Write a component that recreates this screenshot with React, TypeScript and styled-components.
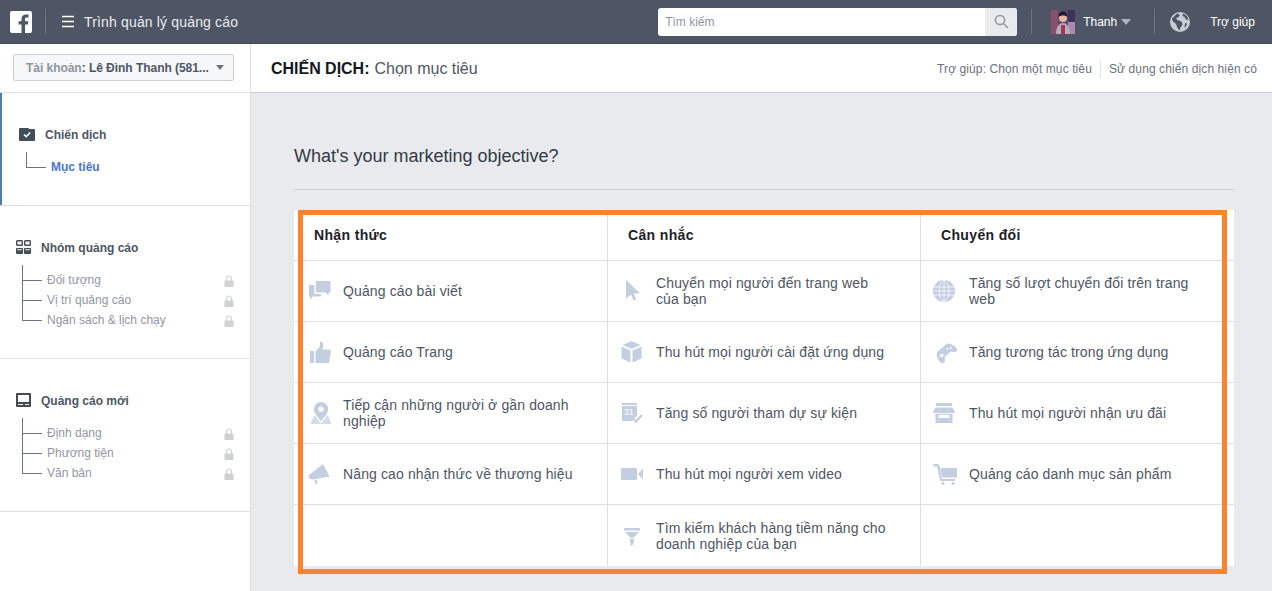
import React from "react";
import styled, { createGlobalStyle } from "styled-components";

const Global = createGlobalStyle`
  html, body { margin: 0; padding: 0; height: 591px; overflow: hidden; background: #e9eaed; }
  body { font-family: "Liberation Sans", Arial, sans-serif; }
  * { box-sizing: border-box; }
`;

const Page = styled.div`
  width: 1272px;
  height: 591px;
  display: flex;
  flex-direction: column;
  overflow: hidden;
`;

const TopBar = styled.header`
  height: 44px;
  flex: none;
  background: #4e5665;
  border-bottom: 1px solid #3f4654;
  display: flex;
  align-items: center;
  color: #fff;
`;
const Logo = styled.svg`
  width: 22px;
  height: 22px;
  margin-left: 10px;
  flex: none;
`;
const BarDivider = styled.span<{ $ml: number }>`
  width: 1px;
  height: 25px;
  background: #6a7282;
  margin-left: ${(p) => p.$ml}px;
  flex: none;
`;
const Burger = styled.svg`
  width: 13px;
  height: 13px;
  margin-left: 16px;
  flex: none;
`;
const AppTitle = styled.span`
  margin-left: 9px;
  font-size: 14px;
  letter-spacing: 0.16px;
  color: #e9ebee;
`;
const Search = styled.div`
  margin-left: 420px;
  width: 359px;
  height: 28px;
  background: #fff;
  border-radius: 3px;
  display: flex;
  overflow: hidden;
`;
const SearchInput = styled.div`
  flex: 1;
  font-size: 12px;
  line-height: 28px;
  padding-left: 7px;
  color: #9197a3;
`;
const SearchBtn = styled.div`
  width: 32px;
  background: #e9eaed;
  display: flex;
  align-items: center;
  justify-content: center;
`;
const Avatar = styled.svg`
  width: 24px;
  height: 24px;
  margin-left: 19px;
  flex: none;
`;
const UserName = styled.span`
  font-size: 12px;
  margin-left: 8px;
  color: #fff;
`;
const Caret = styled.span<{ $c: string; $w?: number }>`
  width: 0;
  height: 0;
  flex: none;
  border-left: ${(p) => p.$w ?? 5}px solid transparent;
  border-right: ${(p) => p.$w ?? 5}px solid transparent;
  border-top: ${(p) => (p.$w ?? 5) + 1}px solid ${(p) => p.$c};
`;
const UserCaret = styled(Caret)`
  margin-left: 4px;
`;
const GlobeIcon = styled.svg`
  width: 20px;
  height: 20px;
  margin-left: 15px;
  flex: none;
`;
const HelpLink = styled.span`
  font-size: 12px;
  margin-left: 20px;
  color: #fff;
`;

const Body = styled.div`
  flex: 1;
  display: flex;
  min-height: 0;
`;
const Sidebar = styled.aside`
  width: 251px;
  flex: none;
  background: #fff;
  border-right: 1px solid #dddfe2;
`;
const AccountWrap = styled.div`
  height: 49px;
  padding: 10px 0 0 13px;
  border-bottom: 1px solid #dddfe2;
`;
const AccountBtn = styled.div`
  width: 221px;
  height: 27px;
  background: #f6f7f8;
  border: 1px solid #cdd0d6;
  border-radius: 2px;
  display: flex;
  align-items: center;
  padding-left: 12px;
  font-size: 12px;
  font-weight: bold;
  letter-spacing: -0.04px;
  color: #4e5665;
  white-space: pre;
`;
const AccountLabel = styled.span`
  color: #8d949e;
`;
const AccountCaret = styled(Caret)`
  margin-left: 7px;
`;
const Section = styled.section<{ $active?: boolean }>`
  padding: 33px 0 28px ${(p) => (p.$active ? 19 : 16)}px;
  border-bottom: 1px solid #dddfe2;
  ${(p) => (p.$active ? "box-shadow: inset 2px 0 0 #4a7cb5;" : "")}
`;
const SectionHead = styled.div`
  height: 16px;
  display: flex;
  align-items: center;
  font-size: 12px;
  font-weight: bold;
  color: #4e5665;
`;
const SectionIcon = styled.svg<{ $gap?: number }>`
  width: 16px;
  height: 16px;
  flex: none;
  margin-right: ${(p) => p.$gap ?? 9}px;
`;
const SectionLabel = styled.span`
  padding-top: 2px;
`;
const Tree = styled.div<{ $active?: boolean }>`
  margin: 15px 0 0 ${(p) => (p.$active ? 7 : 6)}px;
`;
const TreeRow = styled.div`
  height: 20px;
  display: flex;
  align-items: flex-start;
  font-size: 12px;
  line-height: 20px;
  color: #9197a3;
`;
const Connector = styled.span<{ $first?: boolean }>`
  width: 20px;
  flex: none;
  height: ${(p) => (p.$first ? 16 : 20)}px;
  margin-top: ${(p) => (p.$first ? -5 : -9)}px;
  border-left: 1px solid #6d7380;
  border-bottom: 1px solid #6d7380;
`;
const TreeLabel = styled.span<{ $active?: boolean }>`
  margin-left: 5px;
  flex: 1;
  ${(p) => (p.$active ? "color: #4a77d4; font-weight: bold;" : "")}
`;
const Lock = styled.svg`
  width: 10px;
  height: 12px;
  flex: none;
  margin: 5px 16px 0 0;
`;

const Main = styled.main`
  flex: 1;
  min-width: 0;
  background: #e9eaed;
`;
const MainHead = styled.div`
  height: 49px;
  background: #fff;
  border-bottom: 1px solid #c9cbcf;
  display: flex;
  align-items: center;
  padding: 1px 15px 0 20px;
`;
const Crumb = styled.b`
  font-size: 16px;
  letter-spacing: -0.02px;
  color: #141823;
`;
const CrumbSub = styled.span`
  font-size: 16px;
  color: #4e5665;
  margin-left: 5px;
  flex: 1;
`;
const HeadLink = styled.span`
  font-size: 12px;
  letter-spacing: 0.1px;
  color: #6a7180;
`;
const HeadSep = styled.span`
  width: 1px;
  height: 18px;
  background: #e3e5e8;
  margin: 0 8px;
`;
const Content = styled.div`
  padding: 52px 0 0 43px;
  width: 983px;
`;
const Question = styled.h1`
  margin: 0;
  font-size: 18px;
  line-height: 22px;
  font-weight: normal;
  color: #333a47;
`;
const Rule = styled.hr`
  margin: 22px 0 20px;
  border: 0;
  height: 1px;
  background: #ccced2;
`;
const TableWrap = styled.div`
  position: relative;
`;
const Table = styled.div`
  display: grid;
  grid-template-columns: 314px 313px 313px;
  grid-template-rows: 51px repeat(5, 61px);
  background: #fff;
`;
const ColHead = styled.div<{ $last?: boolean }>`
  border-bottom: 1px solid #dddfe2;
  border-right: ${(p) => (p.$last ? "0" : "1px solid #dddfe2")};
  padding-left: 20px;
  font-size: 14px;
  font-weight: bold;
  letter-spacing: 0.35px;
  line-height: 51px;
  color: #1d2129;
`;
const Cell = styled.div<{ $last?: boolean; $bottom?: boolean; $first?: boolean }>`
  border-bottom: ${(p) => (p.$bottom ? "0" : "1px solid #dddfe2")};
  border-right: ${(p) => (p.$last ? "0" : "1px solid #dddfe2")};
  display: flex;
  align-items: center;
  padding-left: ${(p) => (p.$first ? 13 : 12)}px;
`;
const CellIcon = styled.svg`
  width: 24px;
  height: 24px;
  flex: none;
  margin-right: 12px;
`;
const CellText = styled.span`
  font-size: 14px;
  line-height: 16px;
  letter-spacing: 0.12px;
  color: #4e5665;
  max-width: 236px;
`;
const Highlight = styled.div`
  position: absolute;
  left: 4px;
  top: 0;
  right: 7px;
  bottom: -8px;
  border: 5px solid #fd8230;
  pointer-events: none;
`;

const C = "#c4cee1";
const icons: Record<string, React.ReactNode> = {
  comment: (
    <g fill={C}>
      <path d="M9 2h14.500v11.500h-2v3l-3-3H9z" />
      <path d="M2 6h5.500v9H14v2.500H6l-3 3v-3H2z" />
    </g>
  ),
  thumb: (
    <g fill={C}>
      <path d="M3 11h4v12H3z" />
      <path d="M8.500 11.500 13 6.500V1.500h1.800l1.500 2.500-.8 5.500H23l1 2-2 11.500H8.500z" />
    </g>
  ),
  pin: (
    <g fill={C}>
      <path
        fillRule="evenodd"
        d="M14 1a7.200 7.200 0 0 1 7.200 7.200c0 4-4.200 8-7.200 12-3-4-7.200-8-7.200-12A7.200 7.200 0 0 1 14 1zm0 4.600a2.700 2.700 0 1 0 0 5.400 2.700 2.700 0 0 0 0-5.400z"
      />
      <path d="M7 14.500h1l5.500 7.500h1L20 14.500h1l3.500 8.500h-21z" opacity=".75" />
    </g>
  ),
  megaphone: (
    <g fill={C}>
      <path d="M16 2l6.500 12.500L6 17.500l-4-1-.5-3z" />
      <path d="M7 18.300l2.200-.5 1.800 3.300-2 1.100z" />
    </g>
  ),
  cursor: <path fill={C} d="M6 1l14 13.200-6.200.4 2.400 6-2.400 1.100-2.600-6L6 19.500z" />,
  box: (
    <g fill={C}>
      <path d="M11.500 1.200 20.500 5l-9 3.800L2.500 5z" />
      <path d="M1.500 6.800 10.500 10.600V22.500L1.500 18.600z" />
      <path d="M21.500 6.800V18.600l-9 3.900V10.600z" />
    </g>
  ),
  calendar: (
    <g>
      <path fill={C} d="M2 2h15v2H2zM2 5h15v10l-5.500 5H2z" />
      <text x="4" y="14" fontFamily="Liberation Sans" fontSize="8.500" fill="#fff">
        31
      </text>
      <path fill="none" stroke={C} strokeWidth="2.400" d="M12.500 17l3.500 3.500 6-6.500" />
    </g>
  ),
  video: (
    <g fill={C}>
      <rect x="1" y="6" width="16" height="12" rx="1" />
      <path d="M23 6.500v11l-5-5.500z" />
    </g>
  ),
  filter: (
    <g fill={C}>
      <path d="M4 4h16v2.500H4z" />
      <path d="M5 8h14l-5 5.500H10z" />
      <path d="M10 14.500h4L13.500 20 10.500 22z" />
    </g>
  ),
  globe: (
    <g fill="none" stroke={C}>
      <circle cx="11" cy="12" r="11" fill={C} stroke="none" />
      <g stroke="#fff" strokeWidth="1" opacity=".75">
        <ellipse cx="11" cy="12" rx="5" ry="10.500" />
        <path d="M11 1v22M1 8h20M.5 12h21M1 16h20" />
      </g>
    </g>
  ),
  gamepad: (
    <g transform="translate(1 1) rotate(-42 12 12)">
      <path
        fill={C}
        fillRule="evenodd"
        d="M7 5.500h10.500c3.500 0 5.500 4.500 5.500 9.500 0 3-2.600 3.800-4.100 1.800L16.500 14h-8l-2.300 2.800C4.700 18.800 1.600 18 1.600 15c0-5 2-9.500 5.400-9.500zM6.400 8.800v1.500H5v1.400h1.400v1.400h1.400v-1.400h1.400v-1.400H7.800V8.800zM16 9a1 1 0 1 0 0 2 1 1 0 0 0 0-2zm3 1.500a1 1 0 1 0 0 2 1 1 0 0 0 0-2z"
      />
    </g>
  ),
  store: (
    <g fill={C}>
      <path d="M3 2h16v3H3z" />
      <path d="M2.500 6.500h17L22 11c0 .6-.8 1-1.500 1h-19C.8 12 0 11.600 0 11z" />
      <path fillRule="evenodd" d="M2.500 13h17v9h-17zM5.500 14v3h11v-3z" />
    </g>
  ),
  cart: (
    <g fill={C}>
      <path d="M0 2h5l1.500 1.500L9 17h13v2H7.200L4 4.500H1z" />
      <path d="M7.500 6H24v9.500H9.200z" />
      <circle cx="10" cy="21.500" r="1.600" />
      <circle cx="20" cy="21.500" r="1.600" />
    </g>
  ),
};

type Item = { icon: string; text?: string };
const columns: { title: string; items: Item[] }[] = [
  {
    title: "Nhận thức",
    items: [
      { icon: "comment", text: "Quảng cáo bài viết" },
      { icon: "thumb", text: "Quảng cáo Trang" },
      { icon: "pin", text: "Tiếp cận những người ở gần doanh nghiệp" },
      { icon: "megaphone", text: "Nâng cao nhận thức về thương hiệu" },
      { icon: "" },
    ],
  },
  {
    title: "Cân nhắc",
    items: [
      { icon: "cursor", text: "Chuyển mọi người đến trang web của bạn" },
      { icon: "box", text: "Thu hút mọi người cài đặt ứng dụng" },
      { icon: "calendar", text: "Tăng số người tham dự sự kiện" },
      { icon: "video", text: "Thu hút mọi người xem video" },
      { icon: "filter", text: "Tìm kiếm khách hàng tiềm năng cho doanh nghiệp của bạn" },
    ],
  },
  {
    title: "Chuyển đổi",
    items: [
      { icon: "globe", text: "Tăng số lượt chuyển đổi trên trang web" },
      { icon: "gamepad", text: "Tăng tương tác trong ứng dụng" },
      { icon: "store", text: "Thu hút mọi người nhận ưu đãi" },
      { icon: "cart", text: "Quảng cáo danh mục sản phẩm" },
      { icon: "" },
    ],
  },
];

const LockIcon = () => (
  <Lock viewBox="0 0 10 12">
    <path fill="none" stroke="#d3d4d8" strokeWidth="1.200" d="M2.600 6V3.400a2.400 2.400 0 0 1 4.800 0V6" />
    <rect x="0.500" y="5.500" width="9" height="6.500" fill="#d0d1d5" />
  </Lock>
);

const TreeList = ({ rows }: { rows: string[] }) => (
  <Tree>
    {rows.map((r, i) => (
      <TreeRow key={r}>
        <Connector $first={i === 0} />
        <TreeLabel>{r}</TreeLabel>
        <LockIcon />
      </TreeRow>
    ))}
  </Tree>
);

export default function App() {
  return (
    <Page>
      <Global />
      <TopBar>
        <Logo viewBox="0 0 22 22">
          <path
            fill="#fff"
            fillRule="evenodd"
            d="M2 0h18a2 2 0 0 1 2 2v18a2 2 0 0 1-2 2h-5v-8.500h2.900l.4-3.300H15V8.100c0-1 .3-1.600 1.700-1.600h1.800V3.600c-.3 0-1.400-.1-2.600-.1-2.600 0-4.400 1.600-4.400 4.500v2.200H8.600v3.300h2.900V22H2a2 2 0 0 1-2-2V2a2 2 0 0 1 2-2z"
          />
        </Logo>
        <BarDivider $ml={13} />
        <Burger viewBox="0 0 13 13">
          <path stroke="#fff" strokeWidth="1.600" d="M0 1.500h12M0 6.500h12M0 11.500h12" />
        </Burger>
        <AppTitle>Trình quản lý quảng cáo</AppTitle>
        <Search>
          <SearchInput>Tìm kiếm</SearchInput>
          <SearchBtn>
            <svg width="15" height="15" viewBox="0 0 15 15" fill="none" stroke="#9197a3" strokeWidth="1.500">
              <circle cx="6" cy="6" r="4.600" />
              <path d="M9.500 9.500l4.500 4.500" />
            </svg>
          </SearchBtn>
        </Search>
        <BarDivider $ml={14} />
        <Avatar viewBox="0 0 24 24">
          <rect width="24" height="24" fill="#5b4a6e" />
          <rect x="0" y="0" width="7" height="24" fill="#8a4f6a" />
          <rect x="17" y="0" width="7" height="12" fill="#3d3558" />
          <rect x="17" y="12" width="7" height="12" fill="#a88ab2" />
          <circle cx="12" cy="8" r="4" fill="#e0b8a4" />
          <path fill="#241c2a" d="M7.500 7c0-4 2-5.500 4.500-5.500S16.500 3 16.500 7c-2-2-7-2-9 0z" />
          <path fill="#b9aabd" d="M5 24c0-7 3-11 7-11s7 4 7 11z" />
          <path fill="#a23a55" d="M10 15h4v9h-4z" />
        </Avatar>
        <UserName>Thanh</UserName>
        <UserCaret $c="#aeb4bf" />
        <BarDivider $ml={23} />
        <GlobeIcon viewBox="0 0 20 20">
          <circle cx="10" cy="10" r="10" fill="#c9ccd2" />
          <path
            fill="#4e5665"
            d="M7 1.500 10 3 8.500 5 6 6.500 7.500 8l4 1.500 1 3-2 3-1 3L7.500 16 6 12 2.500 9 2 6.500zM13 1.500l4 2.500 1.500 4-2.500-.5L14.500 5 12.500 4zM15 11l2 .5-1 3-1.500 1z"
          />
        </GlobeIcon>
        <HelpLink>Trợ giúp</HelpLink>
      </TopBar>
      <Body>
        <Sidebar>
          <AccountWrap>
            <AccountBtn>
              <AccountLabel>Tài khoản</AccountLabel>: Lê Đình Thanh (581...
              <AccountCaret $c="#6d7380" $w={4} />
            </AccountBtn>
          </AccountWrap>
          <Section $active>
            <SectionHead>
              <SectionIcon viewBox="0 0 16 16" $gap={10}>
                <path fill="#444b59" d="M0 3a1 1 0 0 1 1-1h8l1.500 1H15a1 1 0 0 1 1 1v10a1 1 0 0 1-1 1H1a1 1 0 0 1-1-1z" />
                <path fill="none" stroke="#fff" strokeWidth="1.600" d="M5 8.500l2.200 2.200L11.200 6.500" />
              </SectionIcon>
              <SectionLabel>Chiến dịch</SectionLabel>
            </SectionHead>
            <Tree $active>
              <TreeRow>
                <Connector $first />
                <TreeLabel $active>Mục tiêu</TreeLabel>
              </TreeRow>
            </Tree>
          </Section>
          <Section>
            <SectionHead>
              <SectionIcon viewBox="0 0 16 16">
                <g fill="none" stroke="#444b59" strokeWidth="1.400">
                  <rect x="0.700" y="1.700" width="5.600" height="4.600" rx="0.800" />
                  <rect x="8.700" y="1.700" width="5.600" height="4.600" rx="0.800" />
                </g>
                <path
                  fill="#444b59"
                  fillRule="evenodd"
                  d="M1 9h5a1 1 0 0 1 1 1v4a1 1 0 0 1-1 1H1a1 1 0 0 1-1-1v-4a1 1 0 0 1 1-1zm.3 1.300v1h4.400v-1zM9 9h5a1 1 0 0 1 1 1v4a1 1 0 0 1-1 1H9a1 1 0 0 1-1-1v-4a1 1 0 0 1 1-1zm.3 1.300v1h4.400v-1z"
                />
              </SectionIcon>
              <SectionLabel>Nhóm quảng cáo</SectionLabel>
            </SectionHead>
            <TreeList rows={["Đối tượng", "Vị trí quảng cáo", "Ngân sách & lịch chạy"]} />
          </Section>
          <Section>
            <SectionHead>
              <SectionIcon viewBox="0 0 16 16">
                <path
                  fill="#444b59"
                  fillRule="evenodd"
                  d="M1 1h13a1 1 0 0 1 1 1v12a1 1 0 0 1-1 1H1a1 1 0 0 1-1-1V2a1 1 0 0 1 1-1zm1 2v7h11V3zm0 9v1h5v-1zm7 0v1h4v-1z"
                />
              </SectionIcon>
              <SectionLabel>Quảng cáo mới</SectionLabel>
            </SectionHead>
            <TreeList rows={["Định dạng", "Phương tiện", "Văn bản"]} />
          </Section>
        </Sidebar>
        <Main>
          <MainHead>
            <Crumb>CHIẾN DỊCH:</Crumb>
            <CrumbSub>Chọn mục tiêu</CrumbSub>
            <HeadLink>Trợ giúp: Chọn một mục tiêu</HeadLink>
            <HeadSep />
            <HeadLink>Sử dụng chiến dịch hiện có</HeadLink>
          </MainHead>
          <Content>
            <Question>What's your marketing objective?</Question>
            <Rule />
            <TableWrap>
              <Table>
                {columns.map((c, i) => (
                  <ColHead key={c.title} $last={i === 2}>
                    {c.title}
                  </ColHead>
                ))}
                {[0, 1, 2, 3, 4].flatMap((row) =>
                  columns.map((c, i) => {
                    const item = c.items[row];
                    return (
                      <Cell key={c.title + row} $first={i === 0} $last={i === 2} $bottom={row === 4}>
                        {item.icon && <CellIcon viewBox="0 0 24 24">{icons[item.icon]}</CellIcon>}
                        {item.text && <CellText>{item.text}</CellText>}
                      </Cell>
                    );
                  })
                )}
              </Table>
              <Highlight />
            </TableWrap>
          </Content>
        </Main>
      </Body>
    </Page>
  );
}
